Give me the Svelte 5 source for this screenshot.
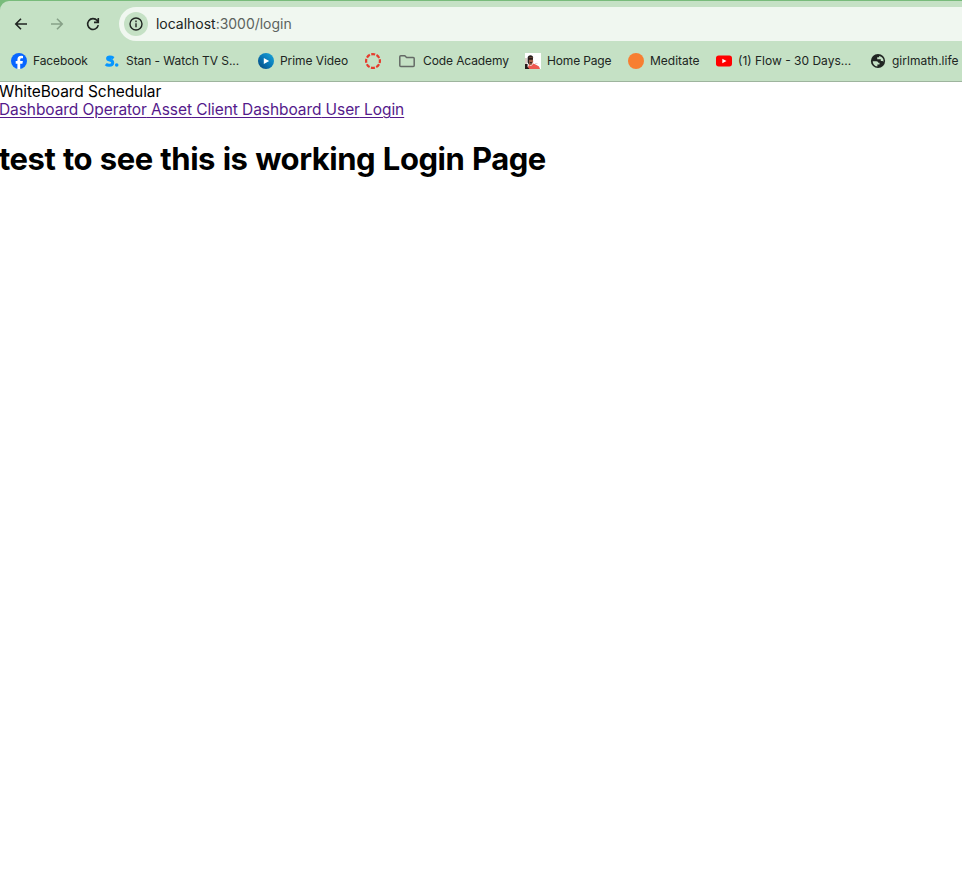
<script>
  const bookmarks = [
    { icon: 'facebook', label: 'Facebook', width: 93, spacing: -0.12 },
    { icon: 'stan', label: 'Stan - Watch TV S...', width: 154, spacing: -0.06 },
    { icon: 'prime', label: 'Prime Video', width: 107, spacing: -0.08 },
    { icon: 'ring', label: '', width: 34, spacing: 0 },
    { icon: 'folder', label: 'Code Academy', width: 126, spacing: -0.1 },
    { icon: 'portrait', label: 'Home Page', width: 103, spacing: -0.15 },
    { icon: 'meditate', label: 'Meditate', width: 88, spacing: 0 },
    { icon: 'youtube', label: '(1) Flow - 30 Days...', width: 154, spacing: 0 },
    { icon: 'globe', label: 'girlmath.life', width: 100, spacing: 0 },
  ];
  const links = ['Dashboard', 'Operator', 'Asset', 'Client Dashboard', 'User', 'Login'];
</script>

<div class="window">
  <header class="chrome">
    <div class="toolbar">
      <button aria-label="Back"><svg width="16" height="16" viewBox="0 0 16 16"><path d="M14 8H2.8M8 2.8 2.8 8 8 13.2" /></svg></button>
      <button class="disabled" aria-label="Forward"><svg width="16" height="16" viewBox="0 0 16 16"><path d="M2 8h11.2M8 2.8 13.2 8 8 13.2" /></svg></button>
      <button aria-label="Reload"><svg width="16" height="16" viewBox="0 0 16 16"><path d="M13.3 9.2A5.4 5.4 0 1 1 12.2 4.6L13.5 6M13.3 2v4.4H9" /></svg></button>
      <div class="address">
        <span class="info"><svg width="16" height="16" viewBox="0 0 16 16"><circle cx="8" cy="8" r="6" /><path d="M8 7.3v4M8 4.6v1.6" /></svg></span>
        <span class="url"><b>localhost</b>:3000/login</span>
      </div>
    </div>
    <nav class="bookmarks">
      {#each bookmarks as item}
        <div class="bookmark {item.icon}" style="width: {item.width}px">
          <svg class="icon" width="16" height="16" viewBox="0 0 16 16">
            {#if item.icon === 'facebook'}
              <circle cx="8" cy="8" r="8" fill="#0866ff" />
              <path d="M6.4 16v-5.3H4.7V8.1h1.7V7c0-2.9 1.3-4.2 4.1-4.2l1.5.1v2.3h-.9c-1.4 0-1.9.4-1.9 1.6v1.3h2.7l-.5 2.6H9.2V16a8 8 0 0 1-2.8 0Z" fill="#fff" />
            {:else if item.icon === 'stan'}
              <path d="M9.6 5.2C8.4 4.4 7.2 4 5.9 4 4.6 4 3.6 4.5 3.6 5.4c0 2.4 5.1.8 5.1 4.3 0 1.6-1.3 2.6-3.5 2.6-1.4 0-2.6-.4-3.4-1.2" fill="none" stroke="#0796ff" stroke-width="3" />
              <circle cx="12.7" cy="12" r="1.8" fill="#0796ff" />
            {:else if item.icon === 'prime'}
              <defs><linearGradient id="prime-blue" x1="1" y1="0" x2="0" y2="1"><stop stop-color="#1ba8da" /><stop offset=".5" stop-color="#0878b8" /><stop offset="1" stop-color="#074477" /></linearGradient></defs>
              <circle cx="8" cy="8" r="8" fill="url(#prime-blue)" />
              <path d="M5.8 5v6L11.2 8Z" fill="#fff" />
            {:else if item.icon === 'ring'}
              <circle cx="8" cy="8" r="6.9" fill="none" stroke="#e63a2c" stroke-width="2.2" stroke-dasharray="4 1.419" stroke-dashoffset="2" />
            {:else if item.icon === 'folder'}
              <path d="M.8 12.8V4.2Q.8 3.2 1.8 3.2h4L7.6 5h6.6q1 0 1 1v6.8q0 1-1 1H1.8q-1 0-1-1Z" transform="translate(0 -.4)" fill="none" stroke="#646a66" stroke-width="1.5" />
            {:else if item.icon === 'portrait'}
              <path d="M0 0h16v16H0z" fill="#fff" />
              <path d="M0 5h2v6H0z" fill="#d9cbc4" />
              <path d="M3 16v-2l1-2 2 1 2.5-2.5 3 1.6 2.5 1.4 1 2.5Z" fill="#ed5a50" />
              <path d="M3.2 4h4.6l.4 5-1.8 3.3L4 12Z" fill="#a76047" />
              <path d="M2.6 5.5C2.3 1.4 8.4 1.1 8.2 5L7 4.6H4.2L4 11.5l-1.4-2Z" fill="#29201e" />
              <path d="M3.2 5h4.7v1.8H3.2Zm1.6 4.3H7v1H4.8ZM0 11h2.6v3L4.5 16H0Z" fill="#251a19" />
              <path d="M10 10h2.5v1H10z" fill="#ded9d8" />
            {:else if item.icon === 'meditate'}
              <circle cx="8" cy="8" r="8" fill="#f77f32" />
            {:else if item.icon === 'youtube'}
              <rect y="2.5" width="16" height="11" rx="2.7" fill="#f00" />
              <path d="M6.3 5.7v4.6L10.5 8Z" fill="#fff" />
            {:else}
              <circle cx="8" cy="8" r="7.1" fill="#202522" />
              <path d="M2.7 8.2h3.7q1.9 0 1.9 1.6h1.2v1.7H7.4v1.9A5.4 5.4 0 0 1 2.7 8.2ZM9.1 3v1.3H7.2v1.9h3.6v1.9h1.7l1 .7A5.4 5.4 0 0 0 9.1 3Z" fill="#c5e1c5" />
            {/if}
          </svg>
          {#if item.label}<span style="letter-spacing: {item.spacing}px">{item.label}</span>{/if}
        </div>
      {/each}
    </nav>
  </header>
  <main>
    <div class="brand">WhiteBoard Schedular</div>
    <div class="links"><a href="#page">{#each links as link, i}{i ? ' ' : ''}{link}{/each}</a></div>
    <h1>test to see this is working Login Page</h1>
  </main>
</div>

<style>
  .window { width: 962px; height: 873px; overflow: hidden; background: #fff; font-family: Inter, "Liberation Sans", sans-serif; color: #000; }
  .chrome { box-sizing: border-box; display: flex; flex-direction: column; height: 82px; padding-top: 1px; background: linear-gradient(#78bb7b, #78bb7b) top / 100% 12px no-repeat; border-bottom: 1px solid #9eb49e; }
  .toolbar { box-sizing: border-box; display: flex; flex: none; align-items: center; gap: 20px; height: 40px; padding: 6px 0 0 13px; background: #c5e1c5; border-top-left-radius: 9px; }
  button { display: flex; width: 16px; height: 16px; padding: 0; border: 0; background: none; flex: none; }
  button svg, .info svg { fill: none; stroke: #202522; stroke-width: 1.6; }
  .info svg { stroke-width: 1.4; }
  .disabled svg { stroke: #87a188; }
  .address { display: flex; align-items: center; height: 34px; flex: 1; margin-left: -2px; background: #f0f7f0; border-radius: 17px 0 0 17px; }
  .info { display: flex; align-items: center; justify-content: center; width: 24px; height: 24px; margin-left: 5px; border-radius: 50%; background: #c5e1c5; }
  .url { margin-left: 8px; padding-bottom: 2px; font-size: 14px; letter-spacing: -0.02px; color: #5c635e; white-space: nowrap; }
  .url b { font-weight: 400; color: #202522; }
  .bookmarks { flex: 1; display: flex; align-items: flex-start; padding: 12px 0 0 11px; background: #c5e1c5; }
  .bookmark { display: flex; align-items: center; flex: none; height: 16px; font-size: 12px; line-height: 16px; color: #202522; white-space: nowrap; }
  .icon { flex: none; margin-right: 6px; }
  .folder .icon { margin-right: 8px; }
  main { margin-left: -1px; padding-top: 1px; }
  .brand, .links { height: 18px; line-height: 18px; font-size: 15.5px; letter-spacing: -0.08px; white-space: nowrap; }
  .links a { color: #551a8b; text-decoration: underline; text-underline-offset: 1.5px; text-decoration-thickness: 1px; }
  h1 { margin: 21px 0 0; font-size: 31px; line-height: 38px; font-weight: 700; letter-spacing: -0.47px; word-spacing: 0.8px; white-space: nowrap; }
</style>
